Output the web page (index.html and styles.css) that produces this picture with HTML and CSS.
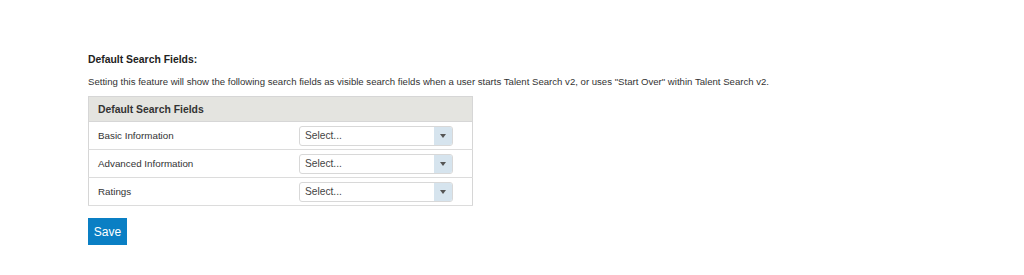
FILE: index.html
```html
<!DOCTYPE html>
<html lang="en">
<head>
  <meta charset="UTF-8" />
  <title>Default Search Fields</title>
  <link rel="stylesheet" href="styles.css">
</head>
<body>
  <div class="page">
    <h3 class="title">Default Search Fields:</h3>
    <p class="desc">Setting this feature will show the following search fields as visible search fields when a user starts Talent Search v2, or uses "Start Over" within Talent Search v2.</p>

    <table class="fields">
      <thead>
        <tr><th colspan="2">Default Search Fields</th></tr>
      </thead>
      <tbody>
        <tr>
          <td class="label">Basic Information</td>
          <td class="pick">
            <div class="select"><span>Select...</span><span class="arrow"></span></div>
          </td>
        </tr>
        <tr>
          <td class="label">Advanced Information</td>
          <td class="pick">
            <div class="select"><span>Select...</span><span class="arrow"></span></div>
          </td>
        </tr>
        <tr>
          <td class="label">Ratings</td>
          <td class="pick">
            <div class="select"><span>Select...</span><span class="arrow"></span></div>
          </td>
        </tr>
      </tbody>
    </table>

    <button class="save">Save</button>
  </div>
</body>
</html>
```

FILE: styles.css
```css
body {
  margin: 0;
  background: #ffffff;
  font-family: 'Liberation Sans', Arial, sans-serif;
  color: #333;
}

.page {
  padding: 53px 0 0 88px;
}

.title {
  margin: 0;
  font-size: 10.4px;
  font-weight: bold;
  color: #222;
  line-height: 14px;
}

.desc {
  margin: 8px 0 0;
  font-size: 9.6px;
  line-height: 14px;
  color: #333;
}

.fields {
  margin-top: 7px;
  width: 385px;
  border-collapse: collapse;
  border: 1px solid #d6d6d6;
  font-size: 9.8px;
}

.fields th {
  background: #e4e4e0;
  text-align: left;
  font-size: 10.4px;
  font-weight: bold;
  color: #333;
  height: 24px;
  padding: 0 0 0 9px;
  border-bottom: 1px solid #d6d6d6;
}

.fields td {
  height: 27px;
  padding: 0;
  border-bottom: 1px solid #dcdcdc;
}

.fields .label {
  padding-left: 9px;
  width: 201px;
  color: #333;
}

.select {
  display: flex;
  align-items: stretch;
  width: 154px;
  height: 20px;
  border: 1px solid #d8d8d8;
  border-radius: 3px;
  box-sizing: border-box;
  font-size: 10.2px;
  color: #444;
}

.select span:first-child {
  flex: 1;
  padding-left: 5px;
  line-height: 18px;
}

.arrow {
  width: 18px;
  background: #d6e4ee;
  border-radius: 0 2px 2px 0;
  display: flex;
  align-items: center;
  justify-content: center;
}

.arrow::after {
  content: "";
  border-left: 3.5px solid transparent;
  border-right: 3.5px solid transparent;
  border-top: 4px solid #555;
}

.save {
  margin-top: 12px;
  background: #0a7fc4;
  color: #fff;
  border: none;
  font-family: 'Liberation Sans', Arial, sans-serif;
  font-size: 12px;
  width: 39px;
  height: 27px;
  padding: 0;
}
```
